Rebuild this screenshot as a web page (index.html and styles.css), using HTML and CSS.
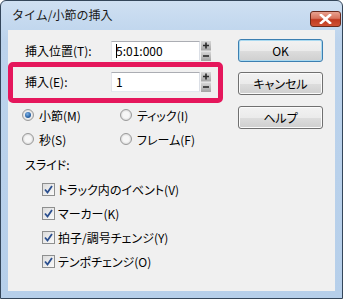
FILE: index.html
```html
<!DOCTYPE html>
<html lang="ja">
<head>
<meta charset="utf-8">
<link rel="stylesheet" href="styles.css">
</head>
<body>
<div class="window">
  <div class="titlebar">
    <span class="title">タイム/小節の挿入</span>
    <div class="close">
      <svg width="13" height="10" viewBox="0 0 13 10"><path d="M2 1 L11 9 M11 1 L2 9" stroke="#fff" stroke-width="2.6" stroke-linecap="square"/></svg>
    </div>
  </div>
  <div class="client">
    <div class="left">
      <div class="field-row first">
        <span class="label">挿入位置(T):</span>
        <div class="input"><span class="caret"></span>5:01:000</div>
        <div class="spin">
          <svg width="10" height="20" viewBox="0 0 10 20">
            <defs><linearGradient id="g1" x1="0" y1="0" x2="0" y2="1"><stop offset="0" stop-color="#d8d8d8"/><stop offset="1" stop-color="#a4a4a4"/></linearGradient></defs>
            <rect x="0" y="0" width="10" height="9.5" fill="url(#g1)"/>
            <rect x="0" y="10.5" width="10" height="9.5" fill="url(#g1)"/>
            <path d="M2 4.5 H8 M5 1.5 V7.5" stroke="#2a2a2a" stroke-width="1.6"/>
            <path d="M2 15 H8" stroke="#2a2a2a" stroke-width="1.6"/>
          </svg>
        </div>
      </div>
      <div class="field-row second">
        <span class="label">挿入(E):</span>
        <div class="input">1</div>
        <div class="spin">
          <svg width="10" height="20" viewBox="0 0 10 20">
            <defs><linearGradient id="g2" x1="0" y1="0" x2="0" y2="1"><stop offset="0" stop-color="#d8d8d8"/><stop offset="1" stop-color="#a4a4a4"/></linearGradient></defs>
            <rect x="0" y="0" width="10" height="9.5" fill="url(#g2)"/>
            <rect x="0" y="10.5" width="10" height="9.5" fill="url(#g2)"/>
            <path d="M2 4.5 H8 M5 1.5 V7.5" stroke="#2a2a2a" stroke-width="1.6"/>
            <path d="M2 15 H8" stroke="#2a2a2a" stroke-width="1.6"/>
          </svg>
        </div>
      </div>
      <div class="highlight"></div>
      <div class="radios">
        <div class="opt"><span class="radio on"></span>小節(M)</div>
        <div class="opt"><span class="radio"></span>ティック(I)</div>
        <div class="opt"><span class="radio"></span>秒(S)</div>
        <div class="opt"><span class="radio"></span>フレーム(F)</div>
      </div>
      <div class="section">スライド:</div>
      <div class="checks">
        <div class="chk"><span class="box"><svg width="9" height="9" viewBox="0 0 9 9"><path d="M1 4.5 L3.5 7.5 L8 1" fill="none" stroke="#2b4f8f" stroke-width="1.8"/></svg></span>トラック内のイベント(V)</div>
        <div class="chk"><span class="box"><svg width="9" height="9" viewBox="0 0 9 9"><path d="M1 4.5 L3.5 7.5 L8 1" fill="none" stroke="#2b4f8f" stroke-width="1.8"/></svg></span>マーカー(K)</div>
        <div class="chk"><span class="box"><svg width="9" height="9" viewBox="0 0 9 9"><path d="M1 4.5 L3.5 7.5 L8 1" fill="none" stroke="#2b4f8f" stroke-width="1.8"/></svg></span>拍子/調号チェンジ(Y)</div>
        <div class="chk"><span class="box"><svg width="9" height="9" viewBox="0 0 9 9"><path d="M1 4.5 L3.5 7.5 L8 1" fill="none" stroke="#2b4f8f" stroke-width="1.8"/></svg></span>テンポチェンジ(O)</div>
      </div>
    </div>
    <div class="buttons">
      <div class="btn default">OK</div>
      <div class="btn cancel">キャンセル</div>
      <div class="btn help">ヘルプ</div>
    </div>
  </div>
</div>
</body>
</html>
```
FILE: styles.css
```css
html, body {
  margin: 0;
  padding: 0;
  background: #ffffff;
}
body {
  font-family: "Noto Sans CJK JP", "Noto Sans", sans-serif;
  font-size: 12px;
  color: #000;
}
.window {
  width: 343px;
  height: 299px;
  box-sizing: border-box;
  border: 1px solid #34465a;
  border-radius: 6px 6px 0 0;
  background: linear-gradient(to bottom, #cfe0f2 0px, #bcd3ec 40px, #b6cfea 100%);
  padding: 0 7px 7px 7px;
  display: flex;
  flex-direction: column;
}
.titlebar {
  height: 29px;
  display: flex;
  align-items: flex-start;
  justify-content: space-between;
  margin-right: -6px;
  padding-left: 4px;
}
.title {
  margin-top: 5px;
  font-size: 12px;
  line-height: 18px;
  color: #1a1a1a;
}
.close {
  margin-top: 10px;
  width: 31px;
  height: 16px;
  box-sizing: border-box;
  border: 1px solid #6a2a1c;
  border-radius: 3px;
  background: linear-gradient(to bottom, #e8a18f 0%, #d8745d 45%, #c0391f 55%, #cf5234 100%);
  display: flex;
  align-items: center;
  justify-content: center;
}
.client {
  flex: 1;
  background: #f0f0f0;
  position: relative;
  display: flex;
  font-feature-settings: "palt";
}
.left {
  width: 215px;
  position: relative;
}
.field-row {
  display: flex;
  align-items: center;
  height: 20px;
}
.field-row.first { margin-top: 11px; }
.field-row.second { margin-top: 11px; }
.label {
  width: 86px;
  padding-left: 17px;
  line-height: 20px;
}
.input {
  width: 89px;
  height: 20px;
  box-sizing: border-box;
  background: #fff;
  border: 1px solid #abadb3;
  border-color: #abadb3 #dbdfe6 #e3e9ef #e2e3ea;
  padding-left: 4px;
  line-height: 18px;
  display: flex;
  align-items: center;
}
.caret {
  display: inline-block;
  width: 0;
  height: 14px;
  border-left: 1px solid #000;
  margin-right: -1px;
}
.spin {
  margin-left: 1px;
  width: 10px;
  height: 20px;
  display: flex;
}
.highlight {
  position: absolute;
  left: 0;
  top: 32px;
  width: 215px;
  height: 41px;
  box-sizing: border-box;
  border: 5px solid #e5175c;
  border-radius: 5px;
}
.radios {
  margin-top: 11px;
  display: grid;
  grid-template-columns: 98px 1fr;
  grid-auto-rows: 24px;
  padding-left: 14px;
}
.opt {
  display: flex;
  align-items: center;
}
.radio {
  width: 12px;
  height: 12px;
  box-sizing: border-box;
  border-radius: 50%;
  border: 1px solid #9a9a9a;
  background: radial-gradient(circle at 50% 50%, #f6f6f6 0 3px, #dcdcdc 5px);
  margin-right: 5px;
  display: inline-flex;
  align-items: center;
  justify-content: center;
}
.radio.on::after {
  content: "";
  width: 6px;
  height: 6px;
  border-radius: 50%;
  background: radial-gradient(circle at 40% 35%, #7fb2e6 0, #2a64a6 60%, #1b4a82 100%);
}
.section {
  margin-top: 2px;
  height: 24px;
  line-height: 24px;
  padding-left: 17px;
}
.checks {
  display: flex;
  flex-direction: column;
  padding-left: 34px;
}
.chk {
  height: 24px;
  display: flex;
  align-items: center;
}
.box {
  width: 13px;
  height: 13px;
  box-sizing: border-box;
  border: 1px solid #8e8f8f;
  background: linear-gradient(135deg, #dcdcdc, #fafafa);
  padding: 1px;
  margin-right: 3px;
  display: inline-flex;
  align-items: center;
  justify-content: center;
}
.buttons {
  margin-left: 15px;
  width: 85px;
  display: flex;
  flex-direction: column;
}
.btn {
  height: 23px;
  box-sizing: border-box;
  border: 1px solid #707070;
  border-radius: 3px;
  background: linear-gradient(to bottom, #f2f2f2 0%, #ebebeb 50%, #dddddd 51%, #cfcfcf 100%);
  display: flex;
  align-items: center;
  justify-content: center;
  box-shadow: inset 0 0 0 1px #fbfbfb;
}
.btn.default {
  margin-top: 9px;
  border-color: #3c7fb1;
  box-shadow: inset 0 0 0 1px #a9d9f0;
}
.btn.cancel { margin-top: 10px; }
.btn.help { margin-top: 11px; }
```
